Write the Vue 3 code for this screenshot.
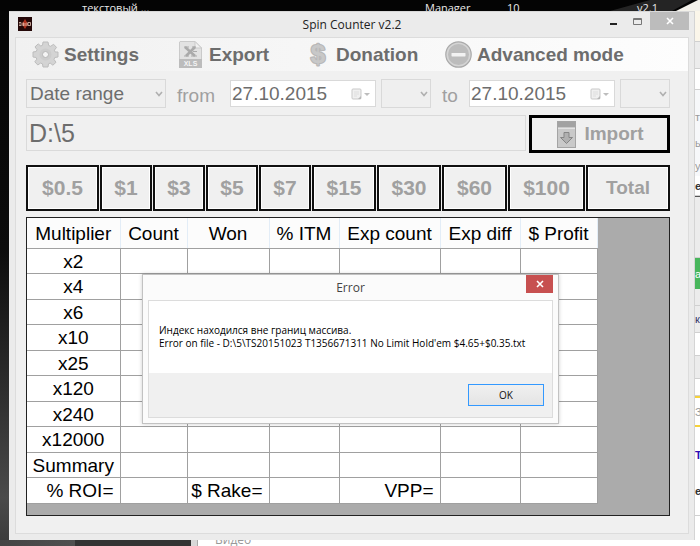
<script setup>
import { ref } from 'vue'

const period = ref('Date range')
const dateFrom = ref('27.10.2015')
const dateTo = ref('27.10.2015')
const folder = ref('D:\\5')

const stakes = ['$0.5', '$1', '$3', '$5', '$7', '$15', '$30', '$60', '$100']
const columns = ['Multiplier', 'Count', 'Won', '% ITM', 'Exp count', 'Exp diff', '$ Profit']
const multipliers = ['x2', 'x4', 'x6', 'x10', 'x25', 'x120', 'x240', 'x12000', 'Summary']

// Sliver of the page behind the window, top to bottom
const slices = [
  { h: 31, tone: 'cream' },
  { h: 27, tone: 'grey' },
  { h: 21, tone: 'white' },
  { h: 14, tone: 'pale' },
  { h: 26, tone: 'pale', text: 'т' },
  { h: 26, tone: 'pale', text: 'ь' },
  { h: 20, tone: 'pale', text: 'у' },
  { h: 20, tone: 'white', text: 'е', ink: 'bold' },
  { h: 62, tone: 'grey dark-top' },
  { h: 31, tone: 'green', text: 'a' },
  { h: 17, tone: 'grey' },
  { h: 27, tone: 'grey', text: 'к', ink: 'navy' },
  { h: 23, tone: 'white' },
  { h: 23, tone: 'grey' },
  { h: 17, tone: 'white' },
  { h: 29, tone: 'yellow', text: 'З' },
  { h: 19, tone: 'yellow' },
  { h: 22, tone: 'white', text: 'Т', ink: 'blue' },
  { h: 50, tone: 'white', text: 'е', ink: 'bold' },
]
</script>

<template>
  <div class="desktop">
    <div class="top-strip">
      <svg class="streak" viewBox="0 0 700 11" preserveAspectRatio="none" aria-hidden="true">
        <rect width="700" height="11" fill="#040404" />
        <path d="M610 11L650 0H692L672 11Z" fill="#242424" />
        <path d="M676 11L698 0H700V11Z" fill="#f3f1ea" />
      </svg>
      <span class="shortcut s1">текстовый ...</span>
      <span class="shortcut s2">Manager</span>
      <span class="shortcut s3">10</span>
      <span class="shortcut s4">v2.1</span>
    </div>
    <div class="left-strip"></div>

    <main class="window">
      <header class="titlebar">
        <svg class="app-icon" viewBox="0 0 14 14" aria-hidden="true">
          <rect width="14" height="14" fill="#240808" />
          <path d="M7 2L10 7L7 12L4 7Z" fill="#b0301c" />
          <path d="M1 5.500H3M1 7H3M1 8.500H3M4 5.500V9M5.500 5.500V9M7 6V9M9 5.500V9M10 5.500H12.500V8.500H10Z" stroke="#e8c8b8" stroke-width=".8" fill="none" />
        </svg>
        <h1>Spin Counter v2.2</h1>
        <div class="caption-buttons">
          <button class="cap" aria-label="Minimize">
            <svg width="8" height="12" viewBox="0 0 8 12"><rect x="0" y="8" width="7" height="2" fill="#222" /></svg>
          </button>
          <button class="cap" aria-label="Maximize">
            <svg width="10" height="12" viewBox="0 0 10 12"><path d="M.5 3.500H8.500V9.500H.5ZM.5 4.500H8.500" fill="none" stroke="#777" /></svg>
          </button>
          <button class="cap close" aria-label="Close">
            <svg width="8" height="8" viewBox="0 0 8 8"><path d="M1 1L7 7M7 1L1 7" stroke="#fff" stroke-width="1.600" /></svg>
          </button>
        </div>
      </header>

      <div class="client">
        <nav class="menu">
          <button class="menu-item">
            <svg viewBox="0 0 27 27" aria-hidden="true">
              <path d="M11 1H16L16.700 4.500L18.600 5.300L21.600 3.300L24.500 6.400L22.400 9.200L23.200 11H26V16L22.800 16.500L22 18.400L24 21.300L20.900 24.200L18.200 22.100L16.500 22.800L16 26H11L10.500 22.900L8.600 22.100L5.800 24L2.800 20.800L4.800 18.200L4.100 16.500L1 16V11L4.200 10.500L5 8.600L3 5.900L6.200 2.900L8.800 5L10.500 4.300Z" fill="#d4d4d4" stroke="#bdbdbd" stroke-linejoin="round" />
              <circle cx="13.500" cy="13.500" r="6" fill="#cccccc" />
              <circle cx="13.500" cy="13.500" r="3" fill="#f4f4f4" stroke="#b6b6b6" />
            </svg>
            <span>Settings</span>
          </button>
          <button class="menu-item">
            <svg viewBox="0 0 27 27" aria-hidden="true">
              <path d="M3 .5H18L24.500 7V19H2.500V1Z" fill="#e2e2e2" stroke="#cacaca" />
              <path d="M18 .5V7H24.500Z" fill="#f0f0f0" stroke="#cacaca" />
              <path d="M8 6L18 15M18 6L9 15" stroke="#aaa" stroke-width="2.600" />
              <path d="M7 6H12M15 6H19M7 15H12M14 15H20M16 10.500H20" stroke="#aaa" stroke-width="1.200" />
              <rect x="2" y="18" width="23" height="9" fill="#bcbcbc" />
              <text x="13.500" y="25.200" text-anchor="middle" font-family="Liberation Sans, sans-serif" font-weight="700" font-size="7" fill="#f4f4f4">XLS</text>
            </svg>
            <span>Export</span>
          </button>
          <button class="menu-item">
            <svg viewBox="0 0 27 27" aria-hidden="true">
              <text x="14" y="22" text-anchor="middle" font-family="Liberation Sans, sans-serif" font-weight="700" font-size="26" fill="#c8c8c8" stroke="#b8b8b8" stroke-width="2.400" stroke-linejoin="round" paint-order="stroke">$</text>
            </svg>
            <span>Donation</span>
          </button>
          <button class="menu-item">
            <svg viewBox="0 0 27 27" aria-hidden="true">
              <circle cx="13.500" cy="13.500" r="12.700" fill="#d4d4d4" stroke="#aaa" stroke-width="1.200" />
              <circle cx="13.500" cy="13.500" r="10.500" fill="#bcbcbc" />
              <rect x="6.500" y="12" width="14" height="3.400" rx=".6" fill="#f2f2f2" />
            </svg>
            <span>Advanced mode</span>
          </button>
        </nav>

        <div class="content">
          <div class="filters">
            <span class="combo wide">
              <select v-model="period" aria-label="Period" disabled><option>Date range</option></select>
              <svg viewBox="0 0 8 6"><path d="M1 1L4 4.500L7 1" /></svg>
            </span>
            <label for="from">from</label>
            <span class="date">
              <input id="from" v-model="dateFrom" type="text" disabled />
              <svg viewBox="0 0 20 12"><rect x="1" y="1" width="9" height="10" rx="1" fill="#f0f0f0" stroke="#c9c9c9" /><path d="M3 4H8M3 6H8M3 8H6" stroke="#dedede" /><path d="M7 11L10 8V11Z" fill="#b8b8b8" /><path d="M13 5H19L16 8Z" fill="#bdbdbd" /></svg>
            </span>
            <span class="combo">
              <select aria-label="Start time" disabled><option></option></select>
              <svg viewBox="0 0 8 6"><path d="M1 1L4 4.500L7 1" /></svg>
            </span>
            <label for="to">to</label>
            <span class="date">
              <input id="to" v-model="dateTo" type="text" disabled />
              <svg viewBox="0 0 20 12"><rect x="1" y="1" width="9" height="10" rx="1" fill="#f0f0f0" stroke="#c9c9c9" /><path d="M3 4H8M3 6H8M3 8H6" stroke="#dedede" /><path d="M7 11L10 8V11Z" fill="#b8b8b8" /><path d="M13 5H19L16 8Z" fill="#bdbdbd" /></svg>
            </span>
            <span class="combo">
              <select aria-label="End time" disabled><option></option></select>
              <svg viewBox="0 0 8 6"><path d="M1 1L4 4.500L7 1" /></svg>
            </span>
          </div>

          <div class="path-row">
            <input v-model="folder" class="path" type="text" aria-label="Folder" disabled />
            <button class="import" disabled>
              <svg viewBox="0 0 19 27" aria-hidden="true">
                <rect x=".5" y=".5" width="18" height="26" fill="#c9c9c9" stroke="#a4a4a4" />
                <rect x="1" y="1" width="17" height="5" fill="#a2a2a2" />
                <path d="M1 7.500H18" stroke="#e2e2e2" />
                <path d="M7 11.500H12V16.500H15.500L9.500 22.500L3.500 16.500H7Z" fill="#b0b0b0" stroke="#858585" />
              </svg>
              <span>Import</span>
            </button>
          </div>

          <div class="stakes">
            <button v-for="s in stakes" :key="s" disabled>{{ s }}</button>
            <button class="total" disabled>Total</button>
          </div>

          <div class="grid">
            <table>
              <colgroup><col v-for="(c, i) in columns" :key="c" :class="'c' + i" /></colgroup>
              <thead>
                <tr><th v-for="c in columns" :key="c" scope="col">{{ c }}</th></tr>
              </thead>
              <tbody>
                <tr v-for="m in multipliers" :key="m">
                  <td>{{ m }}</td>
                  <td v-for="n in 6" :key="n"></td>
                </tr>
                <tr class="sums">
                  <td>% ROI=</td><td></td><td>$ Rake=</td><td></td><td>VPP=</td><td></td><td></td>
                </tr>
              </tbody>
            </table>
          </div>
        </div>
      </div>
    </main>

    <div class="right-strip" aria-hidden="true">
      <div v-for="(s, i) in slices" :key="i" :class="['slice', s.tone, s.ink]" :style="{ height: s.h + 'px' }">{{ s.text }}</div>
    </div>
    <div class="bottom-strip"><span class="dark"></span><span class="edge"></span><span class="page">Видео</span></div>

    <section class="dialog" role="dialog" aria-labelledby="dialog-title">
      <header class="dialog-title">
        <h2 id="dialog-title">Error</h2>
        <button class="dialog-close" aria-label="Close">
          <svg width="8" height="8" viewBox="0 0 8 8"><path d="M1 1L7 7M7 1L1 7" stroke="#fff" stroke-width="1.600" /></svg>
        </button>
      </header>
      <div class="dialog-body">
        <p>Индекс находился вне границ массива.<br />Error on file - D:\5\TS20151023 T1356671311 No Limit Hold'em $4.65+$0.35.txt</p>
        <footer><button class="ok">OK</button></footer>
      </div>
    </section>
  </div>
</template>

<style>
body { margin: 0; }
</style>

<style scoped>
* { box-sizing: border-box; }
button, input, select { font: inherit; margin: 0; padding: 0; }
h1, h2, p { margin: 0; font-weight: 400; }
svg { display: block; }

.desktop {
  position: relative;
  display: grid;
  grid-template-columns: 9px minmax(0, 1fr) 5px;
  grid-template-rows: 11px 1fr 6px;
  min-height: 100vh;
  overflow: hidden;
  font-family: "Liberation Sans", Arial, sans-serif;
  font-size: 19px;
  background: #050505;
}
.top-strip { position: relative; grid-column: 1 / -1; overflow: hidden; }
.streak { width: 100%; height: 100%; }
.shortcut {
  position: absolute;
  top: 0;
  font: 11px/16px "Open Sans", "Noto Sans", sans-serif;
  color: #e8e8e8;
  white-space: nowrap;
}
.s1 { left: 82px; }
.s2 { left: 425px; }
.s3 { left: 507px; }
.s4 { left: 637px; }
.left-strip { background: linear-gradient(#050505 0, #0c0c0c 45%, #2e2e2e 72%, #4a4a4a 92%, #3c3c3c); }

.window {
  display: flex;
  flex-direction: column;
  padding: 0 5px 6px 6px;
  background: #ebebeb;
  border-top: 1px solid #d8d8d8;
  border-right: 1px solid #d4d4d4;
}
.titlebar {
  display: grid;
  grid-template-columns: 1fr auto 1fr;
  height: 25px;
}
.app-icon { width: 14px; height: 14px; margin: 5px 0 0 3px; }
h1 { font: 12px/25px "Open Sans", "Noto Sans", sans-serif; color: #222; }
.caption-buttons { display: flex; justify-content: flex-end; align-items: flex-start; }
.cap {
  display: flex;
  align-items: center;
  justify-content: center;
  width: 24px;
  height: 18px;
  background: none;
  border: 0;
}
.cap.close { width: 39px; background: #bcbcbc; }

.client { flex: 1; background: #f0f0f0; border: 1px solid #dcdcdc; }
.menu {
  display: grid;
  grid-template-columns: 145px 127px 141px auto;
  justify-content: start;
  height: 33px;
  padding-left: 16px;
  background: linear-gradient(90deg, #f1f1f1, #fdfdfd);
}
.menu-item {
  display: flex;
  align-items: center;
  gap: 5px;
  font-weight: 700;
  color: #6d6d6d;
  background: none;
  border: 0;
  white-space: nowrap;
}
.menu-item svg { width: 27px; height: 27px; }

.content { padding: 8px 18px 16px 10px; }
.filters { display: flex; align-items: center; height: 29px; color: #6d6d6d; }
.filters label { padding: 4px 0 0 11px; color: #a0a0a0; }
.combo { position: relative; width: 50px; height: 29px; }
.combo.wide { flex: 1; max-width: 141px; }
.combo select {
  width: 100%;
  height: 100%;
  padding-left: 3px;
  appearance: none;
  color: #6d6d6d;
  opacity: 1;
  background: #efefef;
  border: 1px solid #d9d9d9;
  border-radius: 0;
}
.combo svg { position: absolute; right: 3px; top: 12px; width: 8px; height: 6px; fill: none; stroke: #b0b0b0; stroke-width: 1.600; }
label[for="from"] { width: 64px; }
label[for="to"] { width: 38px; }
.date {
  display: flex;
  align-items: center;
  width: 146px;
  height: 27px;
  margin-right: 5px;
  padding: 0 4px 0 1px;
  background: #fff;
  border: 1px solid #d9d9d9;
}
.date input { flex: 1; min-width: 0; color: #6d6d6d; background: none; border: 0; }
.date svg { width: 20px; height: 12px; }

.path-row { display: flex; gap: 3px; margin-top: 7px; }
.path {
  flex: 1;
  min-width: 0;
  height: 36px;
  padding-left: 2px;
  font-size: 25px;
  color: #6d6d6d;
  background: #f0f0f0;
  border: 1px solid #dadada;
}
.import {
  display: flex;
  align-items: center;
  justify-content: center;
  gap: 8px;
  width: 141px;
  height: 38px;
  padding-left: 2px;
  font-weight: 700;
  color: #a0a0a0;
  background: #f0f0f0;
  border: 3px solid #000;
}
.import svg { width: 19px; height: 27px; }

.stakes {
  display: grid;
  grid-template-columns: 73fr 52fr 52fr 52fr 52fr 64fr 64fr 65fr 77fr 84fr;
  gap: 1px;
  margin-top: 12px;
}
.stakes button {
  height: 46px;
  min-width: 0;
  font-size: 21px;
  font-weight: 700;
  color: #a0a0a0;
  background: #f0f0f0;
  border: 2px solid #101010;
  box-shadow: inset 0 0 0 1px #fff;
}
.stakes .total { font-size: 19px; }

.grid {
  height: 299px;
  margin-top: 6px;
  overflow: hidden;
  background: #ababab;
  border: 1px solid #222;
}
table { table-layout: fixed; width: 570px; border-collapse: collapse; color: #000; background: #fff; }
.c0 { width: 93px; }
.c1 { width: 67px; }
.c2 { width: 82px; }
.c3 { width: 70px; }
.c4 { width: 101px; }
.c5 { width: 80px; }
.c6 { width: 77px; }
th {
  height: 30px;
  padding: 2px 0 0;
  font-weight: 400;
  background: #fcfcfc;
  border-right: 1px solid #e3edf7;
  border-bottom: 1px solid #a0a0a0;
  white-space: nowrap;
}
td {
  height: 25px;
  padding: 2px 0 0;
  line-height: 22px;
  text-align: center;
  border-right: 1px solid #a0a0a0;
  border-bottom: 1px solid #a0a0a0;
}
tr:nth-child(even) td { height: 26px; }
.sums td { padding-right: 6px; text-align: right; white-space: nowrap; }

.right-strip { height: 0; min-height: 100%; overflow: visible; background: #fff; }
.slice {
  display: flex;
  align-items: center;
  overflow: hidden;
  font-size: 11px;
  color: #999;
  border-bottom: 1px solid #d0d0d0;
}
.cream { background: #fbf6ea; }
.grey { background: #ececec; }
.white { background: #fff; }
.pale { background: #f7f8fa; border-bottom: 0; }
.dark-top { border-top: 1px solid #555; }
.green { color: #fff; background: #48b65c; border: 0; }
.yellow { border-bottom: 0; border-top: 2px solid #f6d13a; }
.bold { font-weight: 700; color: #333; }
.navy { color: #336; }
.blue { font-weight: 700; color: #2b0bb5; border: 0; }

.bottom-strip { grid-column: 1 / -1; display: flex; overflow: hidden; background: linear-gradient(90deg, #444, #505050 75px, #333 75px); }
.dark { width: 191px; }
.edge { width: 7px; background: #d8d8d8; border-right: 1px solid #aaa; }
.page { flex: 1; height: 6px; padding-left: 17px; font: 12px/0 "Open Sans", "Noto Sans", sans-serif; color: #999; background: #fff; }

.dialog {
  position: absolute;
  left: 142px;
  top: 274px;
  width: 417px;
  padding: 0 5px 5px;
  font-family: "Open Sans", "Noto Sans", sans-serif;
  background: #fbfbfb;
  border: 1px solid #c2c2c2;
  box-shadow: 0 0 4px rgba(0, 0, 0, .2);
}
.dialog-title { display: grid; grid-template-columns: 1fr auto 1fr; height: 25px; }
h2 { grid-column: 2; font-size: 12px; line-height: 26px; color: #444; }
.dialog-close {
  display: flex;
  align-items: center;
  justify-content: center;
  justify-self: end;
  width: 27px;
  height: 18px;
  background: #c75050;
  border: 0;
}
.dialog-body { background: #fff; border: 1px solid #dcdcdc; }
.dialog-body p { height: 72px; padding: 23px 10px 0; font-size: 10px; line-height: 13px; color: #000; white-space: nowrap; }
footer { display: flex; justify-content: flex-end; padding: 11px 8px; background: #f0f0f0; }
.ok {
  width: 76px;
  height: 22px;
  font-size: 10px;
  color: #111;
  background: linear-gradient(#f0f0f0, #e4e4e4);
  border: 1px solid #3399ff;
}
</style>
